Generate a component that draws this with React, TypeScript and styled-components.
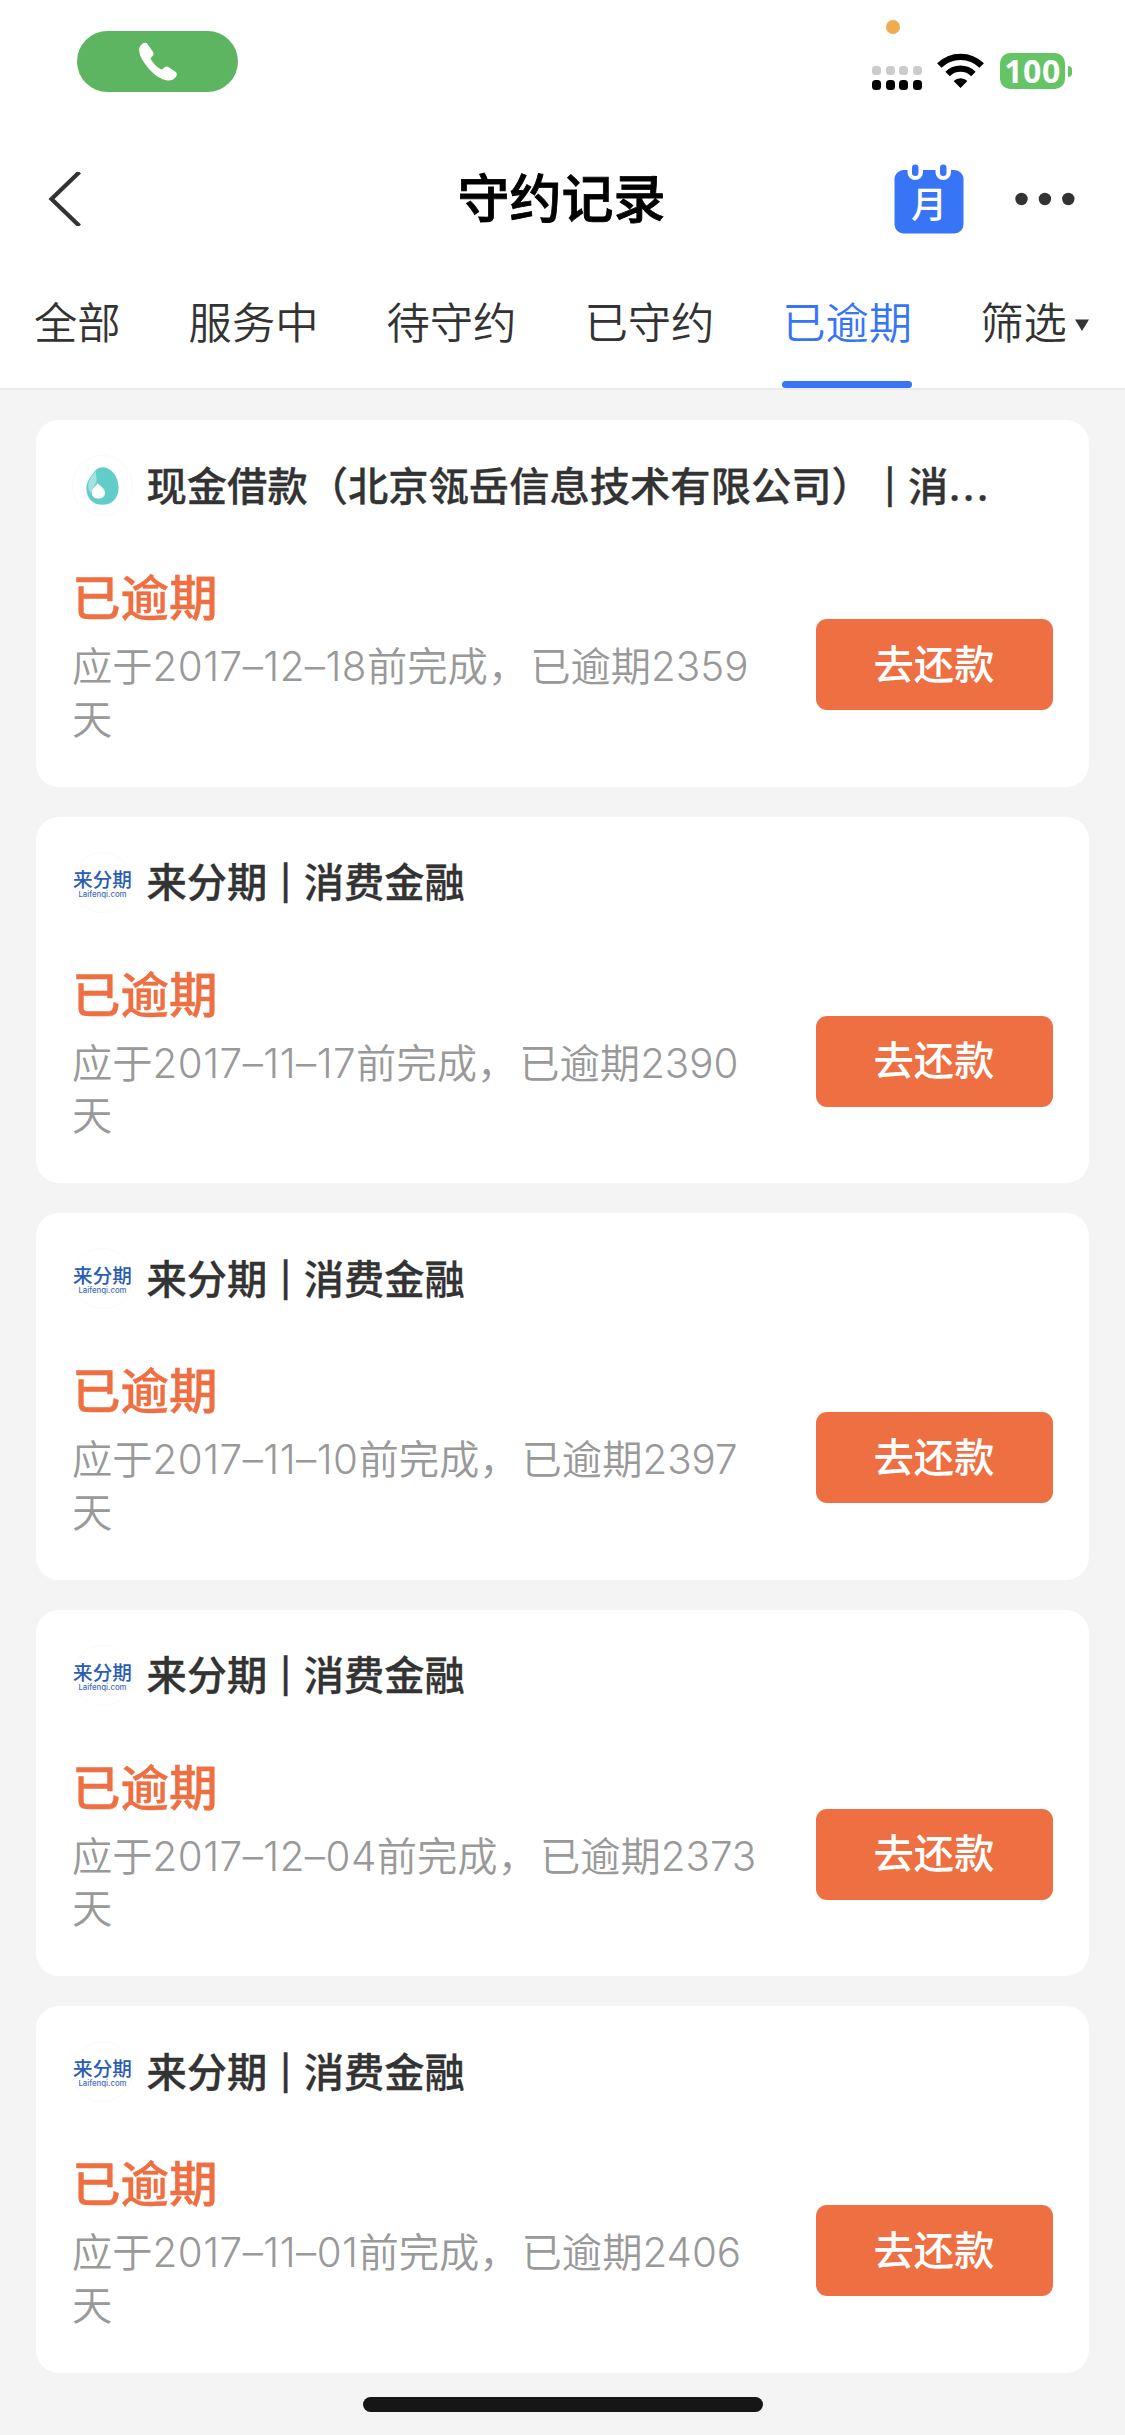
import React from "react";
import styled, { createGlobalStyle } from "styled-components";

const Global = createGlobalStyle`
  * { box-sizing: border-box; }
  body {
    margin: 0;
    background: #f4f4f4;
    font-family: Inter, "Noto Sans CJK SC", sans-serif;
  }
`;

const Screen = styled.div`
  width: 1125px;
  height: 2435px;
  display: flex;
  flex-direction: column;
  background: #f4f4f4;
  overflow: hidden;
`;

const Header = styled.header`
  height: 390px;
  flex: none;
  display: flex;
  flex-direction: column;
  background: #fff;
  border-bottom: 2px solid #ebebeb;
`;

const StatusBar = styled.div`
  height: 124px;
  display: flex;
  justify-content: space-between;
  align-items: flex-start;
  padding: 0 53px 0 77px;
`;

const CallPill = styled.div`
  width: 161px;
  height: 61px;
  margin-top: 31px;
  border-radius: 31px;
  background: #5eb561;
  display: flex;
  align-items: center;
  justify-content: center;
`;

const StatusIcons = styled.div`
  display: grid;
  grid-template-columns: 49.5px 47px 72px;
  grid-template-rows: 14px 36px;
  row-gap: 19px;
  column-gap: 15.7px;
  padding-top: 20px;
`;

const MicDot = styled.span`
  grid-column: 1 / -1;
  width: 14px;
  height: 14px;
  margin-left: 14px;
  border-radius: 50%;
  background: #f0ab4e;
`;

const Signal = styled.div`
  display: grid;
  grid-template-columns: repeat(4, 9px);
  grid-template-rows: 9px 9.5px;
  justify-content: space-between;
  row-gap: 5px;
  padding-top: 13px;
`;

const SignalDot = styled.i<{ $on: boolean }>`
  border-radius: 3.5px;
  background: ${(p) => (p.$on ? "#000" : "#cbcbcb")};
`;

const Battery = styled.div`
  display: flex;
  align-items: center;
  gap: 3px;
`;

const BatteryBody = styled.div`
  width: 65px;
  height: 36px;
  border-radius: 10px;
  background: #65c466;
  color: #fff;
  font: 700 32px/36px "Noto Sans", sans-serif;
  letter-spacing: 0.6px;
  text-align: center;
`;

const BatteryTip = styled.i`
  width: 4px;
  height: 11px;
  border-radius: 0 6px 6px 0;
  background: #65c466;
`;

const NavBar = styled.div`
  height: 150px;
  display: grid;
  grid-template-columns: 1fr auto 1fr;
  align-items: center;
  padding: 0 50px 0 48px;
`;

const Title = styled.h1`
  margin: 2px 0 0;
  font-size: 52px;
  line-height: 60px;
  font-weight: 500;
  -webkit-text-stroke: 0.8px #000;
  color: #000;
`;

const Actions = styled.div`
  display: flex;
  align-items: center;
  justify-content: flex-end;
  gap: 51px;
`;

const CalendarButton = styled.div`
  display: grid;
  width: 70px;
  height: 70px;
  > * { grid-area: 1 / 1; }
`;

const CalendarGlyph = styled.span`
  color: #fff;
  font-size: 36px;
  font-weight: 500;
  line-height: 70px;
  padding: 6px 0 0 0;
  text-align: center;
`;

const Tabs = styled.nav`
  height: 114px;
  display: flex;
  gap: 68px;
  padding-left: 34px;
`;

const Tab = styled.div<{ $active?: boolean }>`
  position: relative;
  flex: none;
  display: flex;
  align-items: center;
  gap: 8px;
  height: 114px;
  padding-bottom: 22px;
  font-size: 43.3px;
  font-weight: 350;
  color: ${(p) => (p.$active ? "#3875f6" : "#333")};
`;

const TabLine = styled.i`
  position: absolute;
  left: 0;
  right: 0;
  bottom: 0;
  height: 7px;
  border-radius: 4px;
  background: #3875f6;
`;

const List = styled.main`
  display: flex;
  flex-direction: column;
  gap: 30px;
  padding: 30px 36px 0;
`;

const Card = styled.article`
  height: 366.5px;
  flex: none;
  border-radius: 23px;
  background: #fff;
  padding: 35px 36.5px 0 36px;
`;

const CardHead = styled.div`
  display: flex;
  align-items: center;
  gap: 13.5px;
  height: 61px;
`;

const Logo = styled.div`
  width: 61px;
  height: 61px;
  flex: none;
  border: 1px solid #fafafa;
  border-radius: 50%;
  display: flex;
  flex-direction: column;
  align-items: center;
  justify-content: center;
`;

const LogoName = styled.span`
  padding-top: 4px;
  font-size: 19.6px;
  line-height: 20px;
  font-weight: 500;
  color: #2b5cb4;
  white-space: nowrap;
`;

const LogoSite = styled.span`
  font-size: 7.8px;
  line-height: 9px;
  font-weight: 500;
  color: #3f6cbb;
`;

const Merchant = styled.h2`
  margin: 2px 0 0;
  font-size: 40.3px;
  line-height: 60px;
  font-weight: 500;
  -webkit-text-stroke: 0.3px #333;
  color: #333;
  white-space: nowrap;
`;

const Bar = styled.span`
  margin: 0 1.5px;
  font-size: 34px;
  vertical-align: 2px;
`;

const Dots = styled.span`
  letter-spacing: 1.8px;
`;

const CardBody = styled.div`
  display: flex;
  justify-content: space-between;
  margin-top: 49px;
`;

const Info = styled.div`
  width: 700px;
`;

const State = styled.div`
  padding-top: 1px;
  font-size: 48.5px;
  line-height: 66px;
  font-weight: 500;
  -webkit-text-stroke: 0.4px #ee6f42;
  color: #ee6f42;
`;

const Detail = styled.p`
  margin: 9px 0 0;
  font-size: 40.3px;
  line-height: 52.8px;
  font-weight: 350;
  color: #999;
`;

const DueDate = styled.span`
  letter-spacing: 0.5px;
`;

const Comma = styled.span`
  letter-spacing: 2px;
`;

const PayButton = styled.button`
  width: 237px;
  height: 91px;
  margin-top: 54px;
  padding: 0;
  border: 0;
  border-radius: 11px;
  background: #ee6f42;
  color: #fff;
  font-family: inherit;
  font-size: 40.3px;
  font-weight: 500;
  line-height: 86px;
`;

const HomeIndicator = styled.div`
  width: 400px;
  height: 15px;
  margin: 24.5px auto 0;
  flex: none;
  border-radius: 8px;
  background: #161616;
`;

const PhoneIcon = () => (
  <svg width="38" height="39" viewBox="0 0 38 39" fill="#fff">
    <path d="M3.2 2.1C4.8.7 7 .2 8.4 1.9l5.4 7.6c1.200 1.800.9 3.200-.3 4.500l-1.300 1.400c-.6.8-.6 1.500 0 2.500 2.300 3.400 5.500 6.700 9.200 9.200.9.6 1.700.5 2.400-.1l1.500-1.400c1.300-1.300 2.900-1.500 4.500-.4l6.600 4.600c1.900 1.300 1.800 3.500.4 5.200-1.900 2.500-4.500 3.700-8 3.500C21.900 38 14 32 8.400 25 3.200 18.400.4 13.200.1 8.300 0 5.700 1.200 3.700 3.200 2.100z" />
  </svg>
);

const WifiIcon = () => (
  <svg width="47" height="36" viewBox="0 0 47 36" fill="none" stroke="#000">
    <path d="M2.300 12.600a30 30 0 0 1 42.400 0" strokeWidth="6.300" />
    <path d="M10.600 21a18.200 18.200 0 0 1 25.800 0" strokeWidth="6.300" />
    <path d="M23.500 35l-6.900-6.900a9.700 9.700 0 0 1 13.800 0z" fill="#000" stroke="none" />
  </svg>
);

const BackIcon = () => (
  <svg width="34" height="54" viewBox="0 0 34 54" fill="none" stroke="#333" strokeWidth="4.200">
    <path d="M31.500 0 3.500 27l28 27" />
  </svg>
);

const CalendarIcon = () => (
  <svg width="70" height="70" viewBox="0 0 70 70">
    <rect x="0.500" y="6" width="69" height="63.500" rx="9" fill="#3875f6" />
    <rect x="13.500" y="-6" width="15.500" height="22" rx="7.700" fill="#fff" />
    <rect x="41.500" y="-6" width="15.500" height="22" rx="7.700" fill="#fff" />
    <rect x="18" y="0.500" width="6.500" height="11.500" rx="3.200" fill="#3875f6" />
    <rect x="46" y="0.500" width="6.500" height="11.500" rx="3.200" fill="#3875f6" />
  </svg>
);

const MoreIcon = () => (
  <svg width="60" height="14" viewBox="0 0 60 14" fill="#333">
    <circle cx="6.500" cy="7" r="6.200" />
    <circle cx="29.900" cy="7" r="6.200" />
    <circle cx="53.300" cy="7" r="6.200" />
  </svg>
);

const Caret = styled.svg`
  margin-top: 9px;
`;

const CaretIcon = () => (
  <Caret width="14" height="12" viewBox="0 0 14 12" fill="#333">
    <path d="M0 .5h14L7 12z" />
  </Caret>
);

const DropIcon = () => (
  <svg width="33" height="38" viewBox="0 0 33 38">
    <path d="M16.500.2C25 .2 32.600 9.500 32.600 20.500S26 37.800 16.500 37.800.4 31.500.4 21.500c0-6 3-10.500 6.200-14.500C9 3.500 12 .2 16.500.2z" fill="#62cdc8" />
    <path d="M10 4C5 9 1 15 2.600 21.500c.6 2 1.600 3.600 2.800 4.500C5.500 20 10 17 10.500 14.500 11 11 9.600 8 10 4z" fill="#a5e3e0" />
    <path d="M11.500 16.200c2.500 2.800 7.500 4.800 7.500 9.500 0 3.500-2.800 5.900-6.400 5.900-4 0-6.900-2.400-6.900-6.200 0-4.200 3.800-5.800 5.800-9.200z" fill="#fff" />
  </svg>
);

type Brand = "drop" | "laifenqi";

const BrandLogo = ({ brand }: { brand: Brand }) => (
  <Logo>
    {brand === "drop" ? (
      <DropIcon />
    ) : (
      <>
        <LogoName>来分期</LogoName>
        <LogoSite>Laifenqi.com</LogoSite>
      </>
    )}
  </Logo>
);

type LoanRecord = {
  brand: Brand;
  name: string;
  category: string;
  cut?: boolean;
  date: string;
  days: number;
};

const records: LoanRecord[] = [
  { brand: "drop", name: "现金借款（北京瓴岳信息技术有限公司）", category: "消", cut: true, date: "2017–12–18", days: 2359 },
  { brand: "laifenqi", name: "来分期", category: "消费金融", date: "2017–11–17", days: 2390 },
  { brand: "laifenqi", name: "来分期", category: "消费金融", date: "2017–11–10", days: 2397 },
  { brand: "laifenqi", name: "来分期", category: "消费金融", date: "2017–12–04", days: 2373 },
  { brand: "laifenqi", name: "来分期", category: "消费金融", date: "2017–11–01", days: 2406 },
];

const tabs = ["全部", "服务中", "待守约", "已守约", "已逾期"];

export default function App() {
  return (
    <Screen>
      <Global />
      <Header>
        <StatusBar>
          <CallPill>
            <PhoneIcon />
          </CallPill>
          <StatusIcons>
            <MicDot />
            <Signal>
              {Array.from({ length: 8 }, (_, i) => (
                <SignalDot key={i} $on={i > 3} />
              ))}
            </Signal>
            <WifiIcon />
            <Battery>
              <BatteryBody>100</BatteryBody>
              <BatteryTip />
            </Battery>
          </StatusIcons>
        </StatusBar>
        <NavBar>
          <BackIcon />
          <Title>守约记录</Title>
          <Actions>
            <CalendarButton>
              <CalendarIcon />
              <CalendarGlyph>月</CalendarGlyph>
            </CalendarButton>
            <MoreIcon />
          </Actions>
        </NavBar>
        <Tabs>
          {tabs.map((t) => (
            <Tab key={t} $active={t === "已逾期"}>
              {t}
              {t === "已逾期" && <TabLine />}
            </Tab>
          ))}
          <Tab>
            筛选
            <CaretIcon />
          </Tab>
        </Tabs>
      </Header>
      <List>
        {records.map((r) => (
          <Card key={r.date}>
            <CardHead>
              <BrandLogo brand={r.brand} />
              <Merchant>
                {r.name} <Bar>|</Bar> {r.category}
                {r.cut && <Dots>...</Dots>}
              </Merchant>
            </CardHead>
            <CardBody>
              <Info>
                <State>已逾期</State>
                <Detail>
                  应于<DueDate>{r.date}</DueDate>前完成<Comma>，</Comma>已逾期{r.days}天
                </Detail>
              </Info>
              <PayButton>去还款</PayButton>
            </CardBody>
          </Card>
        ))}
      </List>
      <HomeIndicator />
    </Screen>
  );
}
